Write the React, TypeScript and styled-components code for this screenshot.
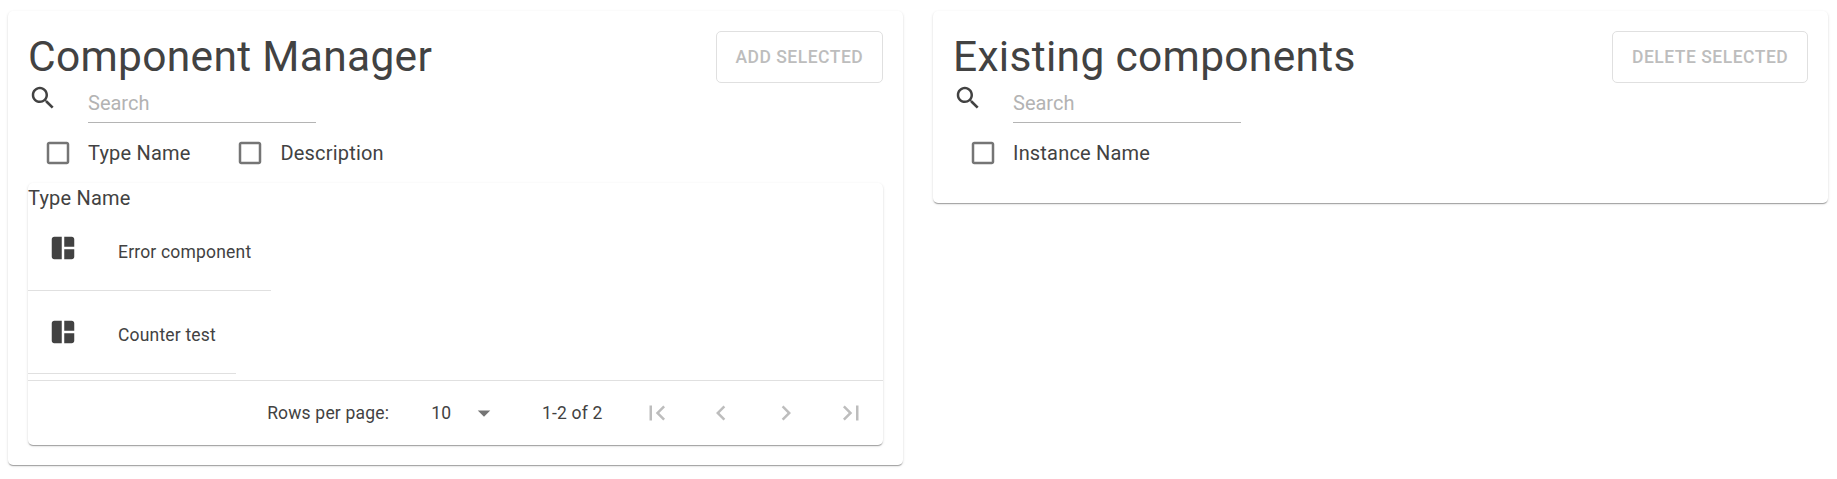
import React from "react";
import styled, { createGlobalStyle } from "styled-components";

const Global = createGlobalStyle`
  * { box-sizing: border-box; }
  body {
    margin: 0;
    background: #fff;
    color: #424242;
    font-family: Roboto, "Liberation Sans", sans-serif;
    font-size: 20px;
  }
`;

const Page = styled.main`
  display: grid;
  grid-template-columns: 895px 895px;
  column-gap: 30px;
  align-items: start;
  padding: 11px 8px;
`;

const Paper = styled.section`
  background: #fff;
  border-radius: 5px;
  box-shadow:
    0 2px 1px -1px rgba(0, 0, 0, 0.2),
    0 1px 1px 0 rgba(0, 0, 0, 0.14),
    0 1px 3px 0 rgba(0, 0, 0, 0.12);
`;

const Card = styled(Paper)<{ $height: number }>`
  height: ${(p) => p.$height}px;
  padding: 20px;
`;

const Header = styled.header`
  display: flex;
  justify-content: space-between;
  align-items: flex-start;
  height: 52px;
`;

const Title = styled.h1`
  margin: 0;
  font-size: 42.5px;
  font-weight: 400;
  line-height: 52px;
  letter-spacing: 0.00735em;
  white-space: nowrap;
`;

const OutlinedButton = styled.button`
  height: 52px;
  padding: 0 18.75px;
  border: 1px solid #e0e0e0;
  border-radius: 5px;
  background: transparent;
  color: #bdbdbd;
  font: 500 17.5px/30px Roboto, "Liberation Sans", sans-serif;
  letter-spacing: 0.02857em;
  text-transform: uppercase;
  white-space: nowrap;
`;

const SearchRow = styled.div`
  display: flex;
  gap: 30px;
  height: 40px;
`;

const SearchInput = styled.input`
  width: 228px;
  height: 40px;
  padding: 1px 0 0;
  border: 0;
  border-bottom: 1px solid #b4b4b4;
  outline: 0;
  background: transparent;
  color: #424242;
  font: 400 20px Roboto, "Liberation Sans", sans-serif;
  letter-spacing: 0;
  &::placeholder { color: #b3b3b3; opacity: 1; }
`;

const Filters = styled.div`
  display: flex;
  gap: 30px;
  height: 60px;
`;

const FilterLabel = styled.label`
  display: flex;
  align-items: center;
  letter-spacing: 0.00938em;
  white-space: nowrap;
`;

const CheckSlot = styled.span`
  display: flex;
  padding: 15px;
  color: #757575;
`;

const Glyph = styled.svg`
  display: block;
  flex: none;
  width: 30px;
  height: 30px;
  fill: currentColor;
`;

const TablePaper = styled(Paper)`
  height: 262px;
`;

const TableHead = styled.div`
  height: 25px;
  line-height: 30px;
  letter-spacing: 0.00938em;
`;

const Row = styled.div`
  display: flex;
  width: max-content;
  height: 83.2px;
  padding: 25.4px 20px 0;
  gap: 40px;
  border-bottom: 1px solid #e0e0e0;
`;

const RowText = styled.span`
  padding-top: 6.6px;
  font-size: 17.5px;
  line-height: 25px;
  letter-spacing: 0.01071em;
`;

const Footer = styled.footer`
  display: flex;
  align-items: center;
  justify-content: flex-end;
  height: 65px;
  margin-top: 5.6px;
  padding-right: 2px;
  border-top: 1px solid #e0e0e0;
  font-size: 17.5px;
  letter-spacing: 0.01071em;
  white-space: nowrap;
`;

const PageSize = styled.span`
  display: flex;
  align-items: center;
  width: 67.5px;
  margin: 0 43.4px 0 42px;
  justify-content: space-between;
`;

const Pager = styled.nav`
  display: flex;
  gap: 4.8px;
  margin-left: 24px;
`;

const PagerButton = styled.button`
  padding: 15px;
  border: 0;
  background: transparent;
  color: #bdbdbd;
`;

const Arrow = styled(Glyph)`
  color: #757575;
`;

const paths = {
  search:
    "M15.5 14h-.79l-.28-.27C15.41 12.59 16 11.11 16 9.5 16 5.91 13.09 3 9.5 3S3 5.91 3 9.5 5.91 16 9.5 16c1.61 0 3.09-.59 4.23-1.57l.27.28v.79l5 4.99L20.49 19l-4.99-5zm-6 0C7.01 14 5 11.99 5 9.5S7.01 5 9.5 5 14 7.01 14 9.5 11.99 14 9.5 14z",
  box: "M19 5v14H5V5h14m0-2H5c-1.1 0-2 .9-2 2v14c0 1.1.9 2 2 2h14c1.1 0 2-.9 2-2V5c0-1.1-.9-2-2-2z",
  dashboard:
    "M11 21H5c-1.1 0-2-.9-2-2V5c0-1.1.9-2 2-2h6v18zm2 0h6c1.1 0 2-.9 2-2v-6h-8v8zm8-10V5c0-1.1-.9-2-2-2h-6v8h8z",
  down: "M7 10l5 5 5-5z",
  first: "M18.41 16.59L13.82 12l4.59-4.59L17 6l-6 6 6 6zM6 6h2v12H6z",
  prev: "M15.41 7.41L14 6l-6 6 6 6 1.41-1.41L10.83 12z",
  next: "M10 6L8.59 7.41 13.17 12l-4.58 4.59L10 18l6-6z",
  last: "M5.59 7.41L10.18 12l-4.59 4.59L7 18l6-6-6-6zM16 6h2v12h-2z",
};

type IconName = keyof typeof paths;

const Icon = ({ name }: { name: IconName }) => (
  <Glyph viewBox="0 0 24 24" aria-hidden="true">
    <path d={paths[name]} />
  </Glyph>
);

const pagerIcons: IconName[] = ["first", "prev", "next", "last"];

interface PanelProps {
  title: string;
  action: string;
  filters: string[];
  height: number;
  children?: React.ReactNode;
}

const Panel = ({ title, action, filters, height, children }: PanelProps) => (
  <Card $height={height}>
    <Header>
      <Title>{title}</Title>
      <OutlinedButton disabled>{action}</OutlinedButton>
    </Header>
    <SearchRow>
      <Icon name="search" />
      <SearchInput placeholder="Search" />
    </SearchRow>
    <Filters>
      {filters.map((label) => (
        <FilterLabel key={label}>
          <CheckSlot>
            <Icon name="box" />
          </CheckSlot>
          {label}
        </FilterLabel>
      ))}
    </Filters>
    {children}
  </Card>
);

export default function App() {
  return (
    <>
      <Global />
      <Page>
        <Panel
          title="Component Manager"
          action="Add selected"
          filters={["Type Name", "Description"]}
          height={454}
        >
          <TablePaper>
            <TableHead>Type Name</TableHead>
            {["Error component", "Counter test"].map((name) => (
              <Row key={name}>
                <Icon name="dashboard" />
                <RowText>{name}</RowText>
              </Row>
            ))}
            <Footer>
              <span>Rows per page:</span>
              <PageSize>
                <span>10</span>
                <Arrow viewBox="0 0 24 24" aria-hidden="true">
                  <path d={paths.down} />
                </Arrow>
              </PageSize>
              <span>1-2 of 2</span>
              <Pager>
                {pagerIcons.map((name) => (
                  <PagerButton key={name} disabled aria-label={name}>
                    <Icon name={name} />
                  </PagerButton>
                ))}
              </Pager>
            </Footer>
          </TablePaper>
        </Panel>
        <Panel
          title="Existing components"
          action="Delete selected"
          filters={["Instance Name"]}
          height={192}
        />
      </Page>
    </>
  );
}
